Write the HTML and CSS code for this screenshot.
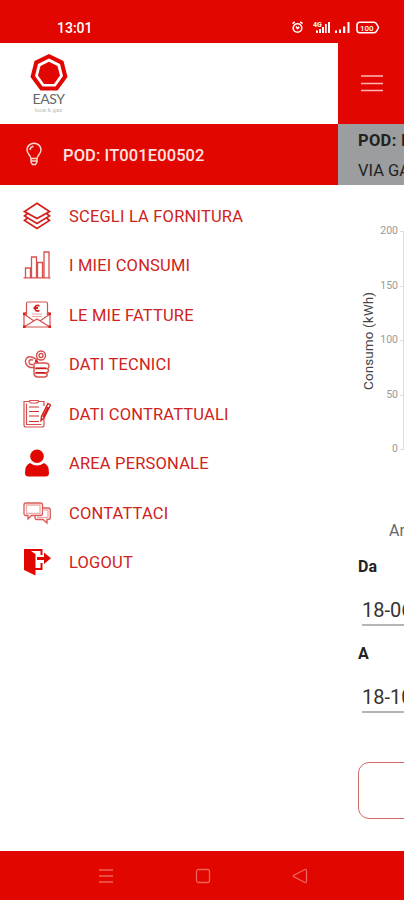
FILE: index.html
```
<!DOCTYPE html>
<html lang="it">
<head>
  <meta charset="UTF-8">
  <meta name="viewport" content="width=device-width, initial-scale=1.0">
  <title>Easy</title>
  <link rel="stylesheet" href="styles.css">
</head>
<body>
  <div class="screen">
    <div class="status-bar">
      <span class="clock">13:01</span>
      <div class="status-icons">
        <svg class="alarm" width="12" height="13" viewBox="0 0 12 13" fill="none" stroke="#fff" stroke-width="1.6">
          <circle cx="5.500" cy="7" r="4.300"/>
          <path d="M.5 2.600 2.700 1M10.500 2.600 8.300 1M4 5.500 5.500 7.500 7.300 5.800"/>
        </svg>
        <svg class="signal-4g" width="17" height="13" viewBox="0 0 17 13" fill="#fff">
          <text x="0" y="6" class="network">4G</text>
          <path d="M3 9.500h2V12H3zM6 8h2v4H6zM9 6h2v6H9zM12 3h1.700v9H12zM15 1h2v11h-2z"/>
        </svg>
        <svg class="signal" width="16" height="13" viewBox="0 0 16 13" fill="#fff">
          <path d="M0 9.500h2V12H0zM4 8.500h2V12H4zM8 5.500h2.300V12H8zM12.500 1h2v11h-2z"/>
        </svg>
        <svg class="battery" width="24" height="13" viewBox="0 0 24 13" fill="none" stroke="#fff" stroke-width="1.6">
          <path d="M4 1.200H18Q20 1.200 21 3.500L22.500 6.500 21 9.500Q20 11.800 18 11.800H4Q1 11.800 1 9V4Q1 1.200 4 1.200Z"/>
          <text x="4" y="9.500" class="charge">100</text>
        </svg>
      </div>
    </div>

    <div class="content">
      <nav class="drawer">
        <div class="logo">
          <svg width="38" height="38" viewBox="0 0 38 38">
            <path fill="#e10600" d="M19 0 33.500 7 37.500 23 27.500 36.500H10.500L.5 23 4.500 7Z"/>
            <path fill="#fff" d="M19 4.500 30 10 33 22 25.500 32.500H12.500L5 22 8 10Z"/>
            <path fill="#e10600" d="M19 7.800 27.500 12 30 21.500 24 30H14L8 21.500 10.500 12Z"/>
          </svg>
          <span class="brand">EASY</span>
          <span class="tagline">luce &amp; gas</span>
        </div>

        <div class="pod">
          <svg width="18" height="24" viewBox="0 0 18 24" fill="none" stroke="#ffd9d6" stroke-width="1.400">
            <path d="M6 16.500C5.500 13 2 12 2 7.800A7 6.600 0 0 1 16 7.800C16 12 12.500 13 12 16.500ZM6 16.500V20L7.500 22.500H10.500L12 20V16.500M6 19H12M5 8Q5.200 4.800 8.500 4.200"/>
          </svg>
          <span>POD: IT001E00502</span>
        </div>

        <ul class="menu">
          <li>
            <svg width="28" height="28" viewBox="0 0 28 28" fill="none" stroke="#d3201d" stroke-width="1.700">
              <path d="M14 1.200 26.500 9.500 14 16.500 1.500 9.500ZM4.500 11.500 1.500 14 14 21.500 26.500 14 23.500 11.500M4.500 16 1.500 18.500 14 26.500 26.500 18.500 23.500 16"/>
            </svg>
            <span>SCEGLI LA FORNITURA</span>
          </li>
          <li>
            <svg width="28" height="28" viewBox="0 0 28 28" fill="none" stroke="#d8504e" stroke-width="1.300">
              <path d="M2.500 26.500V17H7.500V26.500M8.500 26.500V6H13.500V26.500M14.500 26.500V11.500H19.500V26.500M21 26.500V1H26V26.500M.5 26.800H27.500"/>
            </svg>
            <span>I MIEI CONSUMI</span>
          </li>
          <li>
            <svg width="28" height="28" viewBox="0 0 28 28" fill="none" stroke="#d8504e" stroke-width="1.200">
              <path d="M3.500 14.500V2.500Q3.500 1 5 1H23Q24.500 1 24.500 2.500V14.500M3.500 11 1 13V26H27V13L24.500 11M1 13 11 20M27 13 17 20M1 26 14 18 27 26"/>
              <path stroke="#e8a3a1" d="M9 13H19M9 15.500H19"/>
              <path stroke="#d3201d" stroke-width="1.800" d="M16.500 4.800Q12 3.500 12 7.300T16.500 9.500M10.500 7H15"/>
              <path fill="#d3201d" stroke="none" d="M0 11.500h2.500V14H0zM25.500 11.500H28V14h-2.500zM0 24.500h2.500V27H0zM25.500 24.500H28V27h-2.500z"/>
            </svg>
            <span>LE MIE FATTURE</span>
          </li>
          <li>
            <svg width="28" height="28" viewBox="0 0 28 28" fill="none" stroke="#d8504e" stroke-width="1.400">
              <circle cx="18" cy="5.500" r="4.500"/>
              <circle cx="18" cy="5.500" r="2"/>
              <path d="M10 7.500Q4 5 2.500 10.500 2 15 7 17.500H12M10 10Q6 9 6 12T10 14.500M10 7.500 14 9.500 13 13H22Q26 13 26 16T23 18.500H12M23 18.500Q26 19 25.500 21T22 23H12M22 23Q25 24 24 26L22 27H14Q11 26.500 11 23V14L14 11"/>
              <path stroke="#c91916" d="M13 18.300H23M13 22.800H22M12 10.500 15 12"/>
            </svg>
            <span>DATI TECNICI</span>
          </li>
          <li>
            <svg width="28" height="28" viewBox="0 0 28 28" fill="none" stroke="#d8504e" stroke-width="1.200">
              <path d="M21 18V25Q21 27 19 27H3Q1 27 1 25V1.500H6L8 3H14L16 1.500H21V6M3.500 3.500V24.500H18.500M6 1.500 7 .5H15L16 1.500"/>
              <path stroke="#d3302d" d="M6 7H16M6 11.500H16M6 16H16M6 21.500H16"/>
              <path stroke="#d3201d" stroke-width="1.400" d="M25 3.500 27.500 5 21 18 18 20.500 18.500 16.500ZM23 7.500 25.500 9M20 17 25 7"/>
            </svg>
            <span>DATI CONTRATTUALI</span>
          </li>
          <li>
            <svg width="28" height="28" viewBox="0 0 28 28" fill="#e10600">
              <circle cx="14" cy="7.300" r="6.800"/>
              <path d="M7 14Q14 19 21 14 26 16 26 24 26 27.500 22.500 27.500H5.500Q2 27.500 2 24 2 16 7 14Z"/>
            </svg>
            <span>AREA PERSONALE</span>
          </li>
          <li>
            <svg width="28" height="28" viewBox="0 0 28 28" fill="none" stroke="#d95a58" stroke-width="1.300">
              <path d="M3 4H17.500Q19.500 4 19.500 6V14.500Q19.500 16.500 17.500 16.500H8.500L5 20V16.500H3Q1 16.500 1 14.500V6Q1 4 3 4Z"/>
              <path d="M3.500 6H17V14.500H3.500Z" stroke="#ebadab"/>
              <path d="M19.500 9H25Q27.300 9 27.300 11V18.500Q27.300 20.500 25 20.500H24V24L20 20.500H14Q12 20.500 12 18.500V16.500"/>
              <path d="M21 11H25V18.500H14" stroke="#ebadab"/>
            </svg>
            <span>CONTATTACI</span>
          </li>
          <li>
            <svg width="28" height="28" viewBox="0 0 28 28" fill="#e10600">
              <path d="M1 1H19.500V7H17.500V3H8L12.500 6V20H17.500V15H19.500V22H12.500V27.500L1 22Z"/>
              <path d="M14 9H21V4.500L28 10.300 21 16V12H14Z"/>
            </svg>
            <span>LOGOUT</span>
          </li>
        </ul>
      </nav>

      <main class="page">
        <div class="toolbar">
          <svg width="22" height="18" viewBox="0 0 22 18" stroke="#ffb9b5" stroke-width="1.500">
            <path d="M0 2H22M0 9.500H22M0 16.500H22"/>
          </svg>
        </div>
        <div class="supply">
          <strong>POD: IT001E00502</strong>
          <span>VIA GARIBALDI</span>
        </div>
        <div class="chart">
          <span class="axis-title">Consumo (kWh)</span>
          <div class="scale">
            <span>200</span>
            <span>150</span>
            <span>100</span>
            <span>50</span>
            <span>0</span>
          </div>
          <div class="plot"></div>
        </div>
        <div class="legend">Anno</div>
        <div class="dates">
          <label>Da</label>
          <div class="date">18-06-2020</div>
          <label>A</label>
          <div class="date">18-10-2020</div>
        </div>
        <div class="submit"></div>
      </main>
    </div>

    <div class="nav-bar">
      <svg width="16" height="16" viewBox="0 0 16 16"><path d="M1 2H15M1 8H15M1 14H15"/></svg>
      <svg width="16" height="16" viewBox="0 0 16 16"><rect x="1.500" y="1.500" width="13" height="13" rx="2"/></svg>
      <svg width="16" height="16" viewBox="0 0 16 16"><path d="M13 1.500Q14.500 1 14.500 3V13Q14.500 15 13 14.500L1.500 8.500V7.500Z"/></svg>
    </div>
  </div>
</body>
</html>
```

FILE: styles.css
```
* {
  box-sizing: border-box;
}

body {
  margin: 0;
  font-family: Roboto, "Liberation Sans", sans-serif;
  background-color: #fff;
}

.screen {
  display: flex;
  flex-direction: column;
  width: 404px;
  height: 900px;
  overflow: hidden;
}

/* Status bar */
.status-bar {
  display: flex;
  justify-content: space-between;
  height: 43px;
  padding: 12px 24px 0 57px;
  background-color: #e10600;
  color: #fff;
}

.clock {
  font-size: 14px;
  font-weight: 500;
  line-height: 32px;
}

.status-icons {
  display: flex;
  gap: 5px;
  padding-top: 9px;
}

.signal-4g {
  margin-left: 4px;
}

.network {
  font-size: 7px;
  font-weight: 700;
}

.charge {
  font-size: 8px;
  font-weight: 500;
  fill: #fff;
  stroke: none;
}

.content {
  display: flex;
  height: 808px;
}

/* Side menu */
.drawer {
  flex: 0 0 338px;
  background-color: #fff;
}

.logo {
  display: flex;
  flex-direction: column;
  align-items: center;
  width: 97px;
  height: 80.5px;
  padding-top: 11px;
}

.logo svg {
  flex: none;
}

.brand {
  font-family: Lato, sans-serif;
  font-size: 14px;
  line-height: 14px;
  color: #666;
  letter-spacing: -0.4px;
}

.tagline {
  font-size: 6px;
  line-height: 8px;
  color: #bbb;
}

.pod {
  display: flex;
  align-items: center;
  gap: 20px;
  height: 61.5px;
  padding-left: 25px;
  background-color: #e10600;
  color: #ffe3e1;
  font-size: 16.5px;
  font-weight: 500;
  letter-spacing: 0.1px;
}

.pod span {
  padding-top: 2px;
}

.menu {
  margin: 0;
  padding: 6px 0 0 23px;
  list-style: none;
}

.menu li {
  display: flex;
  align-items: center;
  gap: 18px;
  height: 49.5px;
  font-size: 16.5px;
  letter-spacing: 0.18px;
  color: #cf2320;
}

.menu li span {
  padding-top: 1px;
}

/* Page behind the menu */
.page {
  flex: 0 0 340px;
}

.toolbar {
  height: 81px;
  padding: 31px 0 0 23px;
  background-color: #e10600;
}

.toolbar svg {
  display: block;
}

.supply {
  display: flex;
  flex-direction: column;
  height: 61px;
  padding: 2px 0 0 20px;
  background-color: #9b9d9e;
  color: #222;
  font-size: 16.5px;
  line-height: 30px;
}

.supply strong {
  letter-spacing: 0.3px;
}

.chart {
  display: flex;
  height: 274px;
  padding-top: 19px;
}

.axis-title {
  width: 16px;
  height: 100px;
  margin: 86px 0 0 22px;
  writing-mode: vertical-rl;
  transform: rotate(180deg);
  font-size: 13.5px;
  line-height: 16px;
  letter-spacing: 0.1px;
  color: #444;
  white-space: nowrap;
}

.scale {
  width: 22px;
  text-align: right;
  font-size: 10.5px;
  color: #999;
}

.scale span {
  display: block;
  height: 54.5px;
  line-height: 54.5px;
}

.plot {
  width: 200px;
  height: 219px;
  margin: 27px 0 0 2px;
  background:
    linear-gradient(#ddd, #ddd) 3px 0 / 1px 100% no-repeat,
    repeating-linear-gradient(#ddd 0 1px, transparent 1px 54.5px);
}

.legend {
  height: 91px;
  padding: 62px 0 0 51px;
  font-size: 16px;
  line-height: 20px;
  color: #666;
}

.dates label {
  display: block;
  height: 47px;
  padding: 5px 0 0 20px;
  font-size: 16px;
  font-weight: 700;
  line-height: 24px;
  color: #222;
}

.date {
  height: 29px;
  margin: 0 0 11px 24px;
  border-bottom: 2px solid #b5b5b5;
  font-size: 20px;
  line-height: 26px;
  color: #333;
}

.submit {
  width: 300px;
  height: 57px;
  margin: 49px 0 0 20px;
  border: 1px solid #cf6b68;
  border-radius: 11px;
}

/* System buttons */
.nav-bar {
  display: flex;
  justify-content: center;
  gap: 81px;
  height: 49px;
  padding: 17px 0 0 1px;
  background-color: #e10600;
}

.nav-bar svg {
  fill: none;
  stroke: #f0625d;
  stroke-width: 1.3;
}
```
